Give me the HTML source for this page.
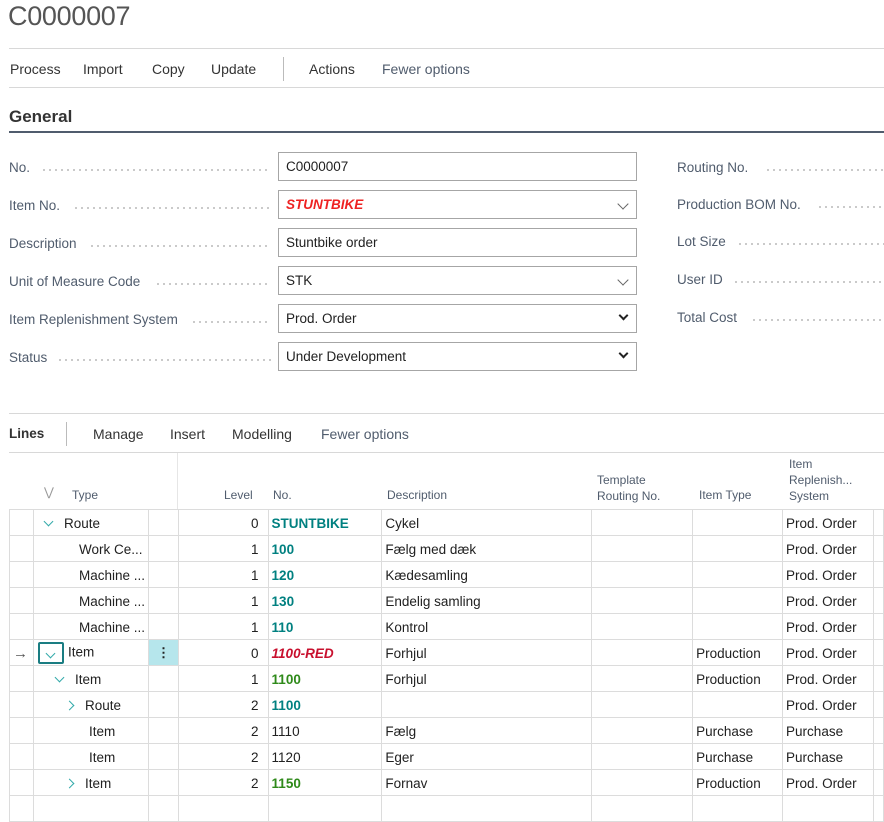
<!DOCTYPE html>
<html><head><meta charset="utf-8"><style>
*{box-sizing:border-box;margin:0;padding:0}
body{width:884px;height:804px;overflow:hidden;background:#fff;font-family:"Liberation Sans",sans-serif;color:#212121;position:relative;font-size:13.5px}
.a{position:absolute;white-space:nowrap}
.title{left:8px;top:1px;font-size:27px;font-weight:normal;color:#555;letter-spacing:-.3px}
.hl{position:absolute;height:1px;background:#d8d8d8}
.tb{top:61px;font-size:14px;color:#333}
.lbl{font-size:13.5px;color:#505c6d;display:flex;align-items:center}
.dots{height:2px;position:absolute;top:9px;background-image:radial-gradient(circle,#b8b8b8 0.8px,transparent 1px);background-size:6px 2px}
.inp{position:absolute;left:278px;width:359px;height:29px;border:1px solid #a6a6a6;padding:6px 7px;font-size:13.5px}
.chev{position:absolute;right:9px;top:9px;width:8px;height:8px;border-right:1px solid #666;border-bottom:1px solid #666;transform:rotate(45deg)}
.chevb{border-width:2px;border-color:#222}
table{position:absolute;left:9px;top:509px;border-collapse:collapse;table-layout:fixed}
td{border:1px solid #dcdcdc;height:26px;padding:0 3px;font-size:13.5px;white-space:nowrap;overflow:hidden;padding-top:1px}
.r{text-align:right;padding-right:9px}
.t{color:#008080;font-weight:bold}
.g{color:#2f8a1a;font-weight:bold}
.red{color:#c8102e;font-weight:bold;font-style:italic}
.hd{font-size:12px;color:#505c6d;line-height:16px}
.dn{display:inline-block;width:7px;height:7px;border-right:1px solid #3aa;border-bottom:1px solid #3aa;transform:rotate(45deg);margin:0 12px -1px 2px;position:relative;top:-4px}
.rt{display:inline-block;width:7px;height:7px;border-right:1px solid #3aa;border-bottom:1px solid #3aa;transform:rotate(-45deg);margin:0 12px 0 2px;position:relative;top:-1px}
</style></head><body>
<div class="a title">C0000007</div>
<div class="hl" style="left:9px;top:48px;width:875px"></div>
<div class="a tb" style="left:10px">Process</div>
<div class="a tb" style="left:83px">Import</div>
<div class="a tb" style="left:152px">Copy</div>
<div class="a tb" style="left:211px">Update</div>
<div class="a" style="left:283px;top:57px;width:1px;height:24px;background:#bbb"></div>
<div class="a tb" style="left:309px">Actions</div>
<div class="a tb" style="left:382px;color:#505c6d">Fewer options</div>
<div class="hl" style="left:9px;top:87px;width:875px"></div>
<div class="a" style="left:9px;top:107px;font-size:17px;font-weight:bold;color:#333">General</div>
<div class="a" style="left:9px;top:131px;width:875px;height:2px;background:#505c6d"></div>

<div class="a lbl" style="left:9px;top:160px;width:262px">No.<span class="dots" style="left:32px;right:0"></span></div>
<div class="a lbl" style="left:9px;top:198px;width:262px">Item No.<span class="dots" style="left:64px;right:0"></span></div>
<div class="a lbl" style="left:9px;top:236px;width:262px">Description<span class="dots" style="left:80px;right:0"></span></div>
<div class="a lbl" style="left:9px;top:274px;width:262px">Unit of Measure Code<span class="dots" style="left:146px;right:0"></span></div>
<div class="a lbl" style="left:9px;top:312px;width:262px">Item Replenishment System<span class="dots" style="left:182px;right:0"></span></div>
<div class="a lbl" style="left:9px;top:350px;width:262px">Status<span class="dots" style="left:48px;right:0"></span></div>

<div class="inp" style="top:152px">C0000007</div>
<div class="inp" style="top:190px;color:#e22;font-weight:bold;font-style:italic">STUNTBIKE<span class="chev"></span></div>
<div class="inp" style="top:228px">Stuntbike order</div>
<div class="inp" style="top:266px">STK<span class="chev"></span></div>
<div class="inp" style="top:304px">Prod. Order<span class="chev chevb" style="top:7px;width:7px;height:7px"></span></div>
<div class="inp" style="top:342px">Under Development<span class="chev chevb" style="top:7px;width:7px;height:7px"></span></div>

<div class="a lbl" style="left:677px;top:160px;width:207px">Routing No.<span class="dots" style="left:88px;right:0"></span></div>
<div class="a lbl" style="left:677px;top:197px;width:207px">Production BOM No.<span class="dots" style="left:140px;right:0"></span></div>
<div class="a lbl" style="left:677px;top:234px;width:207px">Lot Size<span class="dots" style="left:60px;right:0"></span></div>
<div class="a lbl" style="left:677px;top:272px;width:207px">User ID<span class="dots" style="left:56px;right:0"></span></div>
<div class="a lbl" style="left:677px;top:310px;width:207px">Total Cost<span class="dots" style="left:74px;right:0"></span></div>

<div class="hl" style="left:9px;top:413px;width:875px"></div>
<div class="a" style="left:9px;top:426px;font-size:13.5px;font-weight:bold;color:#333">Lines</div>
<div class="a" style="left:66px;top:422px;width:1px;height:24px;background:#bbb"></div>
<div class="a tb" style="left:93px;top:426px">Manage</div>
<div class="a tb" style="left:170px;top:426px">Insert</div>
<div class="a tb" style="left:232px;top:426px">Modelling</div>
<div class="a tb" style="left:321px;top:426px;color:#505c6d">Fewer options</div>
<div class="hl" style="left:9px;top:452px;width:875px"></div>
<div class="a" style="left:177px;top:453px;width:1px;height:56px;background:#e6e6e6"></div>

<div class="a hd" style="left:44px;top:484px;color:#999">&#8897;</div>
<div class="a hd" style="left:72px;top:487px">Type</div>
<div class="a hd" style="left:224px;top:487px">Level</div>
<div class="a hd" style="left:273px;top:487px">No.</div>
<div class="a hd" style="left:387px;top:487px">Description</div>
<div class="a hd" style="left:597px;top:472px">Template<br>Routing No.</div>
<div class="a hd" style="left:699px;top:487px">Item Type</div>
<div class="a hd" style="left:789px;top:456px">Item<br>Replenish...<br>System</div>

<table>
<colgroup><col style="width:24px"><col style="width:114px"><col style="width:30px"><col style="width:90px"><col style="width:114px"><col style="width:210px"><col style="width:102px"><col style="width:90px"><col style="width:91px"><col style="width:10px"></colgroup>
<tr><td></td><td style="padding-left:9px"><span class="dn"></span>Route</td><td></td><td class="r">0</td><td class="t">STUNTBIKE</td><td>Cykel</td><td></td><td></td><td>Prod. Order</td><td></td></tr>
<tr><td></td><td style="padding-left:45px">Work Ce...</td><td></td><td class="r">1</td><td class="t">100</td><td>Fælg med dæk</td><td></td><td></td><td>Prod. Order</td><td></td></tr>
<tr><td></td><td style="padding-left:45px">Machine ...</td><td></td><td class="r">1</td><td class="t">120</td><td>Kædesamling</td><td></td><td></td><td>Prod. Order</td><td></td></tr>
<tr><td></td><td style="padding-left:45px">Machine ...</td><td></td><td class="r">1</td><td class="t">130</td><td>Endelig samling</td><td></td><td></td><td>Prod. Order</td><td></td></tr>
<tr><td></td><td style="padding-left:45px">Machine ...</td><td></td><td class="r">1</td><td class="t">110</td><td>Kontrol</td><td></td><td></td><td>Prod. Order</td><td></td></tr>
<tr><td style="color:#555;padding-left:3px;font-size:15px">&rarr;</td><td style="padding-left:4px"><span style="display:inline-block;width:26px;height:22px;border:2px solid #1a7d82;border-radius:2px;vertical-align:middle;margin-right:4px;text-align:center"><span class="dn" style="margin:0;top:1px"></span></span>Item</td><td style="background:#b6e6ec;text-align:center;font-weight:bold">&#8942;</td><td class="r">0</td><td class="red">1100-RED</td><td>Forhjul</td><td></td><td>Production</td><td>Prod. Order</td><td></td></tr>
<tr><td></td><td style="padding-left:20px"><span class="dn"></span>Item</td><td></td><td class="r">1</td><td class="g">1100</td><td>Forhjul</td><td></td><td>Production</td><td>Prod. Order</td><td></td></tr>
<tr><td></td><td style="padding-left:30px"><span class="rt"></span>Route</td><td></td><td class="r">2</td><td class="t">1100</td><td></td><td></td><td></td><td>Prod. Order</td><td></td></tr>
<tr><td></td><td style="padding-left:55px">Item</td><td></td><td class="r">2</td><td>1110</td><td>Fælg</td><td></td><td>Purchase</td><td>Purchase</td><td></td></tr>
<tr><td></td><td style="padding-left:55px">Item</td><td></td><td class="r">2</td><td>1120</td><td>Eger</td><td></td><td>Purchase</td><td>Purchase</td><td></td></tr>
<tr><td></td><td style="padding-left:30px"><span class="rt"></span>Item</td><td></td><td class="r">2</td><td class="g">1150</td><td>Fornav</td><td></td><td>Production</td><td>Prod. Order</td><td></td></tr>
<tr><td></td><td></td><td></td><td></td><td></td><td></td><td></td><td></td><td></td><td></td></tr>
</table>
</body></html>
